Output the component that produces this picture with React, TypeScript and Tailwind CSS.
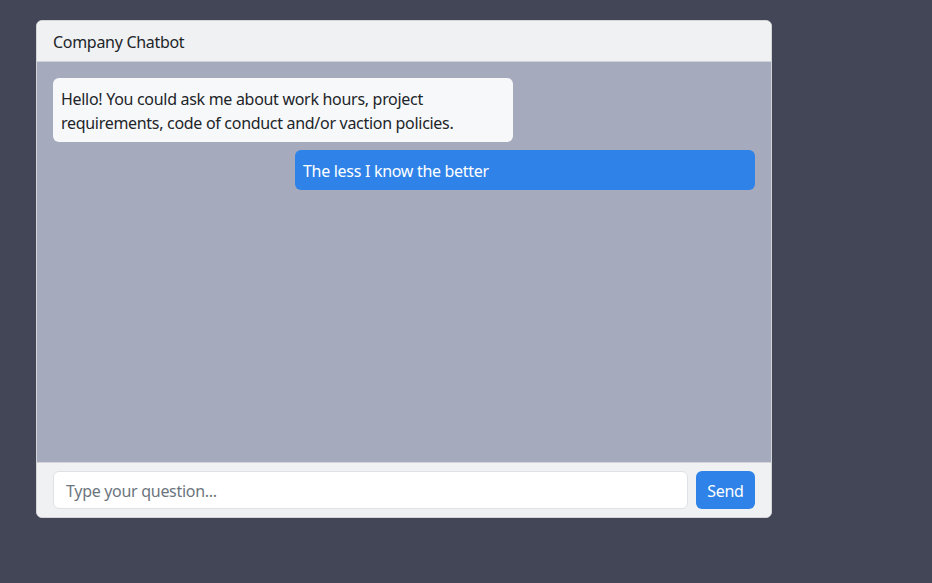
export default function App() {
  return (
    <div className="min-h-[583px] w-full bg-[#434657] pt-5 pl-9" style={{ fontFamily: '"Segoe UI", "Noto Sans", "Open Sans", sans-serif' }}>
      <div className="flex w-[736px] flex-col overflow-hidden rounded-md border border-[#d4d5d9] bg-white text-[16px] tracking-[-0.3px] text-[#212529]">
        <div className="border-b border-[#cfd1d6] bg-[#f0f1f3] px-4 pt-[9px] pb-[7px] leading-6">Company Chatbot</div>
        <div className="flex h-[400px] flex-col gap-2 bg-[#a6aabd] p-4">
          <div className="w-[460px] self-start rounded-md bg-[#f7f8fa] px-2 pt-[9px] pb-[7px] leading-6">
            Hello! You could ask me about work hours, project requirements, code of conduct and/or vaction policies.
          </div>
          <div className="w-[460px] self-end rounded-md bg-[#2f83e8] px-2 pt-[9px] pb-[7px] leading-6 text-white">
            The less I know the better
          </div>
        </div>
        <div className="flex gap-2 border-t border-[#d4d5d9] bg-[#f0f1f3] px-4 py-2">
          <input
            className="h-[38px] flex-1 rounded-md border border-[#dee2e6] bg-white px-3 pt-[2px] text-[16px] tracking-[-0.3px] text-[#212529] outline-none placeholder:text-[#6c757d]"
            placeholder="Type your question..."
          />
          <button className="h-[38px] w-[59px] rounded-md bg-[#2f83e8] pt-[2px] text-white">Send</button>
        </div>
      </div>
    </div>
  );
}
